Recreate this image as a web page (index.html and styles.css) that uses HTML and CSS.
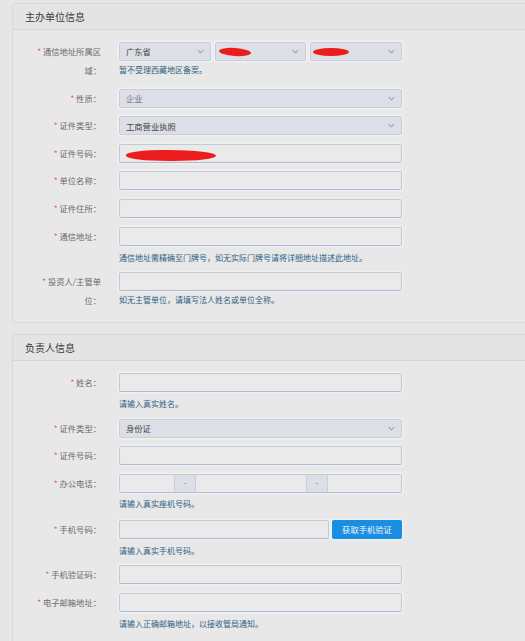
FILE: index.html
```html
<!DOCTYPE html>
<html lang="zh-CN">
<head>
<meta charset="utf-8">
<title>备案信息</title>
<link rel="stylesheet" href="styles.css">
</head>
<body>
<div class="page">
  <section class="panel">
    <div class="panel-head">主办单位信息</div>
    <div class="panel-body">
      <div class="row">
        <div class="label"><span class="req">*</span> 通信地址所属区<br>域：</div>
        <div class="ctrl">
          <div class="trio">
            <div class="field select"><span class="val">广东省</span><svg class="chev" viewBox="0 0 8 5"><polyline points="1,1 4,4 7,1"/></svg></div>
            <div class="field select"><span class="blot blot-a"></span><svg class="chev" viewBox="0 0 8 5"><polyline points="1,1 4,4 7,1"/></svg></div>
            <div class="field select"><span class="blot blot-b"></span><svg class="chev" viewBox="0 0 8 5"><polyline points="1,1 4,4 7,1"/></svg></div>
          </div>
          <div class="help help-up">暂不受理西藏地区备案。</div>
        </div>
      </div>
      <div class="row">
        <div class="label"><span class="req">*</span> 性质：</div>
        <div class="ctrl">
          <div class="field select"><span class="val muted">企业</span><svg class="chev" viewBox="0 0 8 5"><polyline points="1,1 4,4 7,1"/></svg></div>
        </div>
      </div>
      <div class="row">
        <div class="label"><span class="req">*</span> 证件类型：</div>
        <div class="ctrl">
          <div class="field select"><span class="val">工商营业执照</span><svg class="chev" viewBox="0 0 8 5"><polyline points="1,1 4,4 7,1"/></svg></div>
        </div>
      </div>
      <div class="row">
        <div class="label"><span class="req">*</span> 证件号码：</div>
        <div class="ctrl">
          <div class="field"><span class="blot blot-c"></span></div>
        </div>
      </div>
      <div class="row">
        <div class="label"><span class="req">*</span> 单位名称：</div>
        <div class="ctrl"><div class="field"></div></div>
      </div>
      <div class="row">
        <div class="label"><span class="req">*</span> 证件住所：</div>
        <div class="ctrl"><div class="field"></div></div>
      </div>
      <div class="row">
        <div class="label"><span class="req">*</span> 通信地址：</div>
        <div class="ctrl">
          <div class="field"></div>
          <div class="help">通信地址需精确至门牌号，如无实际门牌号请将详细地址描述此地址。</div>
        </div>
      </div>
      <div class="row last">
        <div class="label"><span class="req">*</span> 投资人/主管单<br>位：</div>
        <div class="ctrl">
          <div class="field"></div>
          <div class="help help-up">如无主管单位，请填写法人姓名或单位全称。</div>
        </div>
      </div>
    </div>
  </section>

  <section class="panel panel-2">
    <div class="panel-head">负责人信息</div>
    <div class="panel-body">
      <div class="row">
        <div class="label"><span class="req">*</span> 姓名：</div>
        <div class="ctrl">
          <div class="field"></div>
          <div class="help">请输入真实姓名。</div>
        </div>
      </div>
      <div class="row">
        <div class="label"><span class="req">*</span> 证件类型：</div>
        <div class="ctrl">
          <div class="field select"><span class="val">身份证</span><svg class="chev" viewBox="0 0 8 5"><polyline points="1,1 4,4 7,1"/></svg></div>
        </div>
      </div>
      <div class="row">
        <div class="label"><span class="req">*</span> 证件号码：</div>
        <div class="ctrl"><div class="field"></div></div>
      </div>
      <div class="row">
        <div class="label"><span class="req">*</span> 办公电话：</div>
        <div class="ctrl">
          <div class="phone">
            <div class="seg seg-1"></div>
            <div class="addon">-</div>
            <div class="seg seg-2"></div>
            <div class="addon">-</div>
            <div class="seg seg-3"></div>
          </div>
          <div class="help help-phone">请输入真实座机号码。</div>
        </div>
      </div>
      <div class="row">
        <div class="label"><span class="req">*</span> 手机号码：</div>
        <div class="ctrl">
          <div class="mobile">
            <div class="field grow"></div>
            <button class="btn" type="button">获取手机验证</button>
          </div>
          <div class="help">请输入真实手机号码。</div>
        </div>
      </div>
      <div class="row">
        <div class="label"><span class="req">*</span> 手机验证码：</div>
        <div class="ctrl"><div class="field"></div></div>
      </div>
      <div class="row">
        <div class="label"><span class="req">*</span> 电子邮箱地址：</div>
        <div class="ctrl">
          <div class="field"></div>
          <div class="help">请输入正确邮箱地址，以接收管局通知。</div>
        </div>
      </div>
    </div>
  </section>
</div>
</body>
</html>
```

FILE: styles.css
```css
html, body {
  margin: 0;
  padding: 0;
  background: #e6e6e6;
  overflow: hidden;
}

body {
  font-family: "Noto Sans CJK SC", "Noto Sans", "Liberation Sans", sans-serif;
  color: #555;
}

.page {
  padding: 3px 0 0 12px;
}

.panel {
  background: #e8e8e8;
  border: 1px solid #d9d9d9;
  border-right: none;
  border-radius: 3px 0 0 3px;
  box-sizing: border-box;
}

.panel-2 {
  margin-top: 11px;
  min-height: 320px;
}

.panel-head {
  height: 25px;
  line-height: 25px;
  padding-left: 12px;
  font-size: 10px;
  color: #3a3a3a;
  background: #e4e4e4;
  border-bottom: 1px solid #d6d6d6;
}

.panel-body {
  padding: 12px 0 12px 0;
}

.row {
  display: grid;
  grid-template-columns: 88px 283px;
  column-gap: 18px;
  margin-bottom: 8.6px;
}

.row.last {
  margin-bottom: 0;
}

.label {
  text-align: right;
  font-size: 8.3px;
  line-height: 19px;
  color: #6a6a6a;
  white-space: nowrap;
}

.req {
  color: #e06a6a;
}

.ctrl {
  display: flex;
  flex-direction: column;
}

.field {
  height: 19px;
  box-sizing: border-box;
  border: 1px solid #c3c9dc;
  border-bottom-color: #b1b9d6;
  border-radius: 2px;
  background: #eaeaea;
  box-shadow: 0 0 0 1.5px rgba(255, 255, 255, 0.35);
  display: flex;
  align-items: center;
  padding: 0 6px;
  font-size: 8.3px;
  color: #444;
}

.select {
  background: #dcdfe6;
  border-color: #c9cedd;
  justify-content: space-between;
}

.val {
  line-height: 1;
}

.val.muted {
  color: #777;
}

.chev {
  width: 7px;
  height: 5px;
  fill: none;
  stroke: #9aa0ad;
  stroke-width: 1.2;
}

.trio {
  display: grid;
  grid-template-columns: 1fr 1fr 1fr;
  column-gap: 4px;
}

.blot {
  display: inline-block;
  background: #ec1c1c;
  border-radius: 50%;
}

.blot-a {
  width: 32px;
  height: 8px;
  margin-left: -3px;
  transform: rotate(4deg);
}

.blot-b {
  width: 36px;
  height: 8px;
  margin-left: -4px;
}

.blot-c {
  width: 90px;
  height: 11px;
  margin-top: 4px;
  border-radius: 45% 55% 50% 50%;
}

.help {
  font-size: 8px;
  line-height: 12px;
  padding-top: 6px;
  height: 18px;
  box-sizing: border-box;
  color: #2f6183;
  white-space: nowrap;
}

.help-up {
  padding-top: 3px;
}

.help-phone {
  padding-top: 5px;
}

.phone {
  display: flex;
  height: 19px;
  box-sizing: border-box;
  border: 1px solid #c3c9dc;
  border-bottom-color: #b1b9d6;
  border-radius: 2px;
  background: #eaeaea;
  box-shadow: 0 0 0 1.5px rgba(255, 255, 255, 0.35);
}

.seg-1 { width: 54px; }
.seg-2 { width: 110px; }
.seg-3 { flex: 1; }

.addon {
  width: 20px;
  background: #dcdfe6;
  border-left: 1px solid #c9cedd;
  border-right: 1px solid #c9cedd;
  text-align: center;
  font-size: 8px;
  line-height: 16px;
  color: #777;
}

.mobile {
  display: flex;
  gap: 3px;
}

.grow {
  flex: 1;
}

.btn {
  width: 70px;
  height: 19px;
  padding: 0;
  border: none;
  border-radius: 2px;
  background: #1a8ee1;
  color: #f4f8fc;
  font-family: "Noto Sans CJK SC", "Noto Sans", sans-serif;
  font-size: 8.3px;
  box-shadow: 0 0 0 1.5px rgba(255, 255, 255, 0.35);
}
```
